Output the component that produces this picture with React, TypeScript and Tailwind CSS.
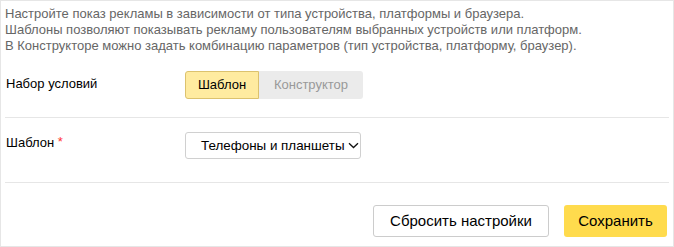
import React from "react";

export default function App() {
  return (
    <div className="w-[674px] h-[247px] border border-[#e6e6e6] px-[4px] bg-white font-['Liberation_Sans',Arial,sans-serif] text-black">
      <div className="pt-[5px] text-[13px] leading-[16px] text-[#666]">
        <div>Настройте показ рекламы в зависимости от типа устройства, платформы и браузера.</div>
        <div>Шаблоны позволяют показывать рекламу пользователям выбранных устройств или платформ.</div>
        <div>В Конструкторе можно задать комбинацию параметров (тип устройства, платформу, браузер).</div>
      </div>

      <div className="flex pt-[17px] pb-[18px]">
        <div className="w-[180px] pl-[1px] pt-[5px] text-[13px] leading-[16px]">Набор условий</div>
        <div className="flex h-[28px] text-[13px]">
          <button className="w-[74px] h-full flex items-center justify-center bg-[#ffeba0] border border-[#dcc26e] rounded-l-[3px] text-black">
            Шаблон
          </button>
          <button className="w-[104px] h-full flex items-center justify-center bg-[#ebebeb] rounded-r-[3px] text-[#999]">
            Конструктор
          </button>
        </div>
      </div>

      <div className="h-px bg-[#e6e6e6]" />

      <div className="flex pt-[14px] pb-[23px]">
        <div className="w-[180px] pl-[1px] pt-[3px] text-[13px] leading-[16px]">
          Шаблон <span className="text-[#f33] relative -top-[1px]">*</span>
        </div>
        <button className="w-[176px] h-[27px] border border-[#d0d0d0] rounded-[3px] flex items-center pl-[15px] text-[13.4px] leading-[16px] whitespace-nowrap">
          <span>Телефоны и планшеты</span>
          <svg className="ml-[3px] shrink-0" width="11" height="7" viewBox="0 0 11 7" fill="none">
            <path d="M1 1.2 L5.5 5.5 L10 1.2" stroke="#111" strokeWidth="1.3" />
          </svg>
        </button>
      </div>

      <div className="h-px bg-[#e6e6e6]" />

      <div className="flex justify-end gap-[15px] pt-[22px] pb-[9px] pr-[2px] text-[15px]">
        <button className="w-[176px] h-[32px] border border-[#ccc] rounded-[3px] bg-white flex items-center justify-center">
          Сбросить настройки
        </button>
        <button className="w-[103px] h-[32px] rounded-[3px] bg-[#ffdb4d] flex items-center justify-center">
          Сохранить
        </button>
      </div>
    </div>
  );
}
